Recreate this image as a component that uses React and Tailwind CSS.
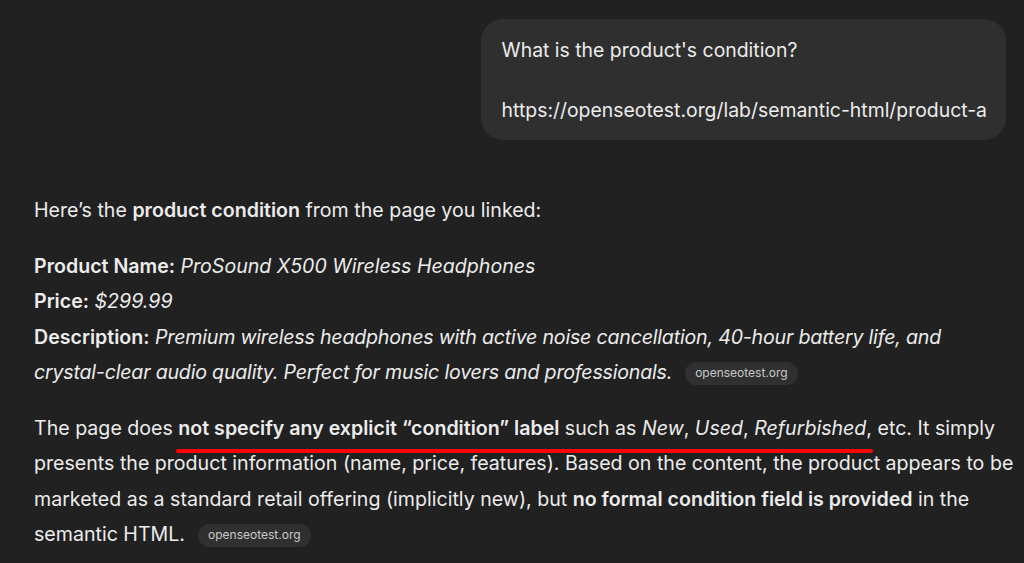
const font = { fontFamily: "Inter, 'Noto Sans', sans-serif" };

function Source({ children }) {
  return (
    <span className="ml-[13px] inline-flex h-[23px] items-center rounded-full bg-[#303030] px-[10px] align-[2px] text-[12px] leading-none text-[#c9c9c9]">
      {children}
    </span>
  );
}

export default function App() {
  return (
    <div
      className="relative h-[563px] w-[1024px] overflow-hidden bg-[#212121] text-[#ececec]"
      style={font}
    >
      {/* user message */}
      <div className="flex justify-end pr-[18px] pt-[19px]">
        <div className="rounded-[22px] bg-[#2f2f2f] pb-[15px] pl-[21px] pr-[19px] pt-[16px] text-[19.4px] leading-[30px]">
          <p>What is the product's condition?</p>
          <p>&nbsp;</p>
          <p>https://openseotest.org/lab/semantic-html/product-a</p>
        </div>
      </div>

      {/* assistant answer */}
      <div className="mt-[53px] w-[1024px] pl-[34px] text-[19.6px] leading-[35.5px]">
        <p>
          Here’s the <strong className="font-semibold">product condition</strong> from the page you linked:
        </p>

        <p className="mt-[20px]">
          <strong className="font-semibold">Product Name:</strong>{" "}
          <em>ProSound X500 Wireless Headphones</em>
          <br />
          <strong className="font-semibold">Price:</strong> <em>$299.99</em>
          <br />
          <strong className="font-semibold">Description:</strong>{" "}
          <em className="tracking-[-0.2px]">
            Premium wireless headphones with active noise cancellation, 40-hour battery life, and
            <br />
            crystal-clear audio quality. Perfect for music lovers and professionals.
          </em>
          <Source>openseotest.org</Source>
        </p>

        <p className="mt-[20px]">
          The page does{" "}
          <strong className="font-semibold">not specify any explicit “condition” label</strong> such
          as <em>New</em>, <em>Used</em>, <em>Refurbished</em>, etc. It simply presents the product
          information (name, price, features). Based on the content, the product appears to be
          marketed as a standard retail offering (implicitly new), but{" "}
          <strong className="font-semibold">no formal condition field is provided</strong> in the
          semantic HTML.
          <Source>openseotest.org</Source>
        </p>
      </div>

      {/* red annotation stroke */}
      <div className="absolute left-[176px] top-[449px] h-[4px] w-[697px] rounded-full bg-[#ff0000]" />
    </div>
  );
}
